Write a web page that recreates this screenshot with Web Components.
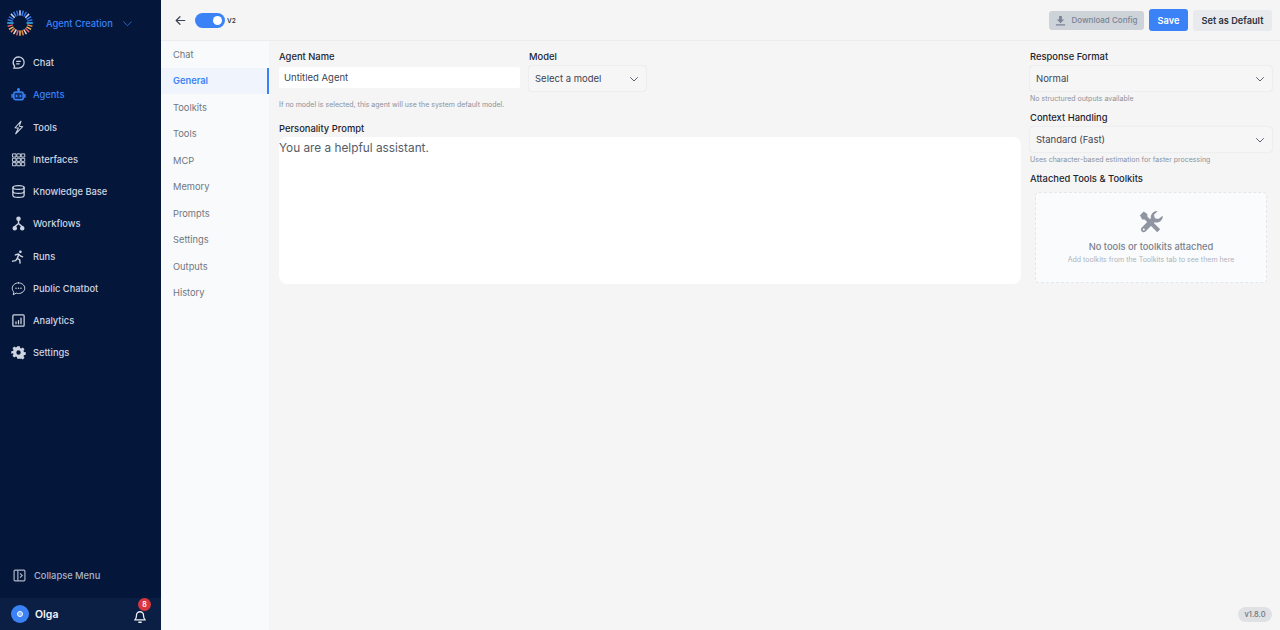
<!DOCTYPE html>
<html lang="en">
<head>
<meta charset="utf-8">
<title>Agent Creation</title>
<style>
  html, body { margin: 0; height: 100%; }
  body { font-family: Inter, "Liberation Sans", sans-serif; background: #f5f5f5; overflow: hidden; }
  app-shell { height: 630px; }
</style>
</head>
<body>
<app-shell>
  <side-bar slot="side" title-text="Agent Creation">
    <nav-item icon="chat" label="Chat"></nav-item>
    <nav-item icon="bot" label="Agents" active></nav-item>
    <nav-item icon="zap" label="Tools"></nav-item>
    <nav-item icon="grid" label="Interfaces"></nav-item>
    <nav-item icon="db" label="Knowledge Base"></nav-item>
    <nav-item icon="flow" label="Workflows"></nav-item>
    <nav-item icon="run" label="Runs"></nav-item>
    <nav-item icon="bubble" label="Public Chatbot"></nav-item>
    <nav-item icon="chart" label="Analytics"></nav-item>
    <nav-item icon="gear" label="Settings"></nav-item>
  </side-bar>
  <top-bar slot="top"></top-bar>
  <tab-rail slot="rail">
    <tab-item>Chat</tab-item>
    <tab-item active>General</tab-item>
    <tab-item>Toolkits</tab-item>
    <tab-item>Tools</tab-item>
    <tab-item>MCP</tab-item>
    <tab-item>Memory</tab-item>
    <tab-item>Prompts</tab-item>
    <tab-item>Settings</tab-item>
    <tab-item>Outputs</tab-item>
    <tab-item>History</tab-item>
  </tab-rail>
  <general-form slot="content"></general-form>
</app-shell>

<script>
const ICONS = {
  chat: '<path d="M12 3a9 9 0 0 1 0 18H4.500l1.300-3A9 9 0 0 1 12 3z"/><path d="M9 10h6M9 14h4"/>',
  bot: '<rect x="4.500" y="8" width="15" height="12.500" rx="3" fill="currentColor" fill-opacity=".25" stroke-width="2.400"/><path d="M12 8V5"/><circle cx="12" cy="3.800" r="1.400" fill="currentColor"/><path d="M1.800 12v4.500M22.200 12v4.500" stroke-width="2.400"/><path d="M9 13.500v1.500M15 13.500v1.500" stroke-width="2.600"/>',
  zap: '<path d="M15 1.500 6.500 13h5.500L8.500 22.500 18.500 10H13z" transform="rotate(6 12 12)" stroke-width="1.700"/>',
  grid: '<g stroke-width="1.500"><rect x="3" y="3" width="5" height="5"/><rect x="10" y="3" width="5" height="5"/><rect x="17" y="3" width="5" height="5"/><rect x="3" y="10" width="5" height="5"/><rect x="10" y="10" width="5" height="5"/><rect x="17" y="10" width="5" height="5"/><rect x="3" y="17" width="5" height="5"/><rect x="10" y="17" width="5" height="5"/><rect x="17" y="17" width="5" height="5"/></g>',
  db: '<ellipse cx="12" cy="5.500" rx="9" ry="3"/><path d="M3 5.500v13c0 1.700 4 3 9 3s9-1.300 9-3v-13"/><path d="M3 12c0 1.700 4 3 9 3s9-1.300 9-3"/>',
  flow: '<circle cx="12" cy="4.500" r="2.600" fill="currentColor"/><circle cx="6" cy="19.500" r="2.600" fill="currentColor"/><circle cx="18" cy="19.500" r="2.600" fill="currentColor"/><path d="M12 7v5M12 12l-6 5M12 12l6 5" stroke-width="2.200"/>',
  run: '<circle cx="15" cy="4.500" r="2.200" fill="currentColor" stroke="none"/><path d="M7 9.500l5-1.500 3 3 3.500 1.500M12.500 9l-2.500 6 4 2.500 .5 5M9.500 15.500 7.500 18.500 2.500 19.500" stroke-width="2.200"/>',
  bubble: '<path d="M12 3c5.500 0 10 3.800 10 8.500S17.500 20 12 20c-1.300 0-2.500-.2-3.600-.6L3.500 22l1-4.200C3 16.200 2 14 2 11.500 2 6.800 6.500 3 12 3z" stroke-width="1.600"/><path d="M8 11.500h.01M12 11.500h.01M16 11.500h.01" stroke-width="2.400"/>',
  chart: '<rect x="3" y="3" width="18" height="18" rx="1.500" stroke-width="2"/><path d="M8 17v-3M12 17v-5M16 17V8" stroke-width="2"/>',
  gear: '<path fill="currentColor" stroke="none" fill-rule="evenodd" d="M10 2h4l.6 2.900 1.700.7 2.500-1.600 2.800 2.800-1.600 2.500.7 1.700 2.900.6v4l-2.900.6-.7 1.700 1.600 2.500-2.800 2.800-2.500-1.600-1.700.7L14 22h-4l-.6-2.900-1.700-.7-2.500 1.600-2.800-2.800 1.600-2.500-.7-1.700L.4 14v-4l2.900-.6.7-1.700L2.400 5.200 5.200 2.400l2.500 1.600 1.700-.7zM12 8.500a3.500 3.500 0 1 0 0 7 3.500 3.500 0 0 0 0-7z"/>'
};

const chevron = (size, color, width = 2) => `<svg width="${size}" height="${size}" viewBox="0 0 24 24" fill="none" stroke="${color}" stroke-width="${width}" stroke-linecap="round" stroke-linejoin="round"><path d="m5 9 7 7 7-7"/></svg>`;

// spinner style logo, ticks go from blue on top to warm colours at the bottom
function logoSvg() {
  let out = '';
  const n = 24;
  for (let i = 0; i < n; i++) {
    const a = (i / n) * Math.PI * 2;
    const deg = i / n * 360;
    const side = deg > 75 && deg < 105 || deg > 255 && deg < 285;
    const r1 = side ? 6.500 : 7.500;
    const x1 = 13 + Math.sin(a) * r1, y1 = 13 - Math.cos(a) * r1;
    const x2 = 13 + Math.sin(a) * 12.800, y2 = 13 - Math.cos(a) * 12.800;
    let c;
    if (side) c = '#38bdf8';
    else if (deg <= 75 || deg >= 285) c = ['#c9d8f5', '#3b82f6', '#2f6fe8'][i % 3];
    else c = ['#f2c14e', '#e8606e', '#f4d6c4', '#ef8a4a'][i % 4];
    out += `<line x1="${x1.toFixed(1)}" y1="${y1.toFixed(1)}" x2="${x2.toFixed(1)}" y2="${y2.toFixed(1)}" stroke="${c}" stroke-width="1.500"/>`;
  }
  return `<svg width="26" height="26" viewBox="0 0 26 26">${out}</svg>`;
}

class AppShell extends HTMLElement {
  constructor() {
    super();
    this.attachShadow({ mode: "open" }).innerHTML = `
      <style>
        :host { display: grid; grid-template-columns: 161px 108px 1fr; grid-template-rows: 41px 1fr; width: 1280px; }
        ::slotted([slot=side]) { grid-row: 1 / 3; }
        ::slotted([slot=top]) { grid-column: 2 / 4; }
      </style>
      <slot name="side"></slot><slot name="top"></slot><slot name="rail"></slot><slot name="content"></slot>`;
  }
}

class SideBar extends HTMLElement {
  constructor() {
    super();
    this.attachShadow({ mode: "open" }).innerHTML = `
      <style>
        :host { display: flex; flex-direction: column; background: #04163a; color: #cfd5e0; width: 161px; height: 630px; font-family: Inter, sans-serif; }
        .brand { display: flex; align-items: center; height: 46px; padding-left: 7px; flex: none; }
        .brand b { font-weight: 500; font-size: 9.300px; color: #3b82f6; margin-left: 13px; }
        .brand svg:last-child { margin-left: 8px; }
        nav { display: flex; flex-direction: column; flex: 1; padding-top: .4px; }
        .collapse { display: flex; align-items: center; gap: 8px; height: 46px; padding-left: 13px; font-size: 9.300px; font-weight: 500; color: #aab4c5; flex: none; margin-top: auto; }
        .user { display: flex; align-items: center; height: 32px; background: #0b1f45; padding-left: 11px; flex: none; }
        .avatar { width: 18px; height: 18px; border-radius: 50%; background: #3b82f6; display: flex; align-items: center; justify-content: center; }
        .avatar i { width: 6px; height: 6px; border: 1.500px solid #fff; border-radius: 50%; background: #8fb5fb; box-sizing: border-box; }
        .name { margin-left: 6px; font-size: 10.500px; font-weight: 600; color: #f3f5f8; }
        .bell { position: relative; margin-left: auto; margin-right: 14px; width: 14px; height: 14px; margin-top: 2px; }
        .badge { position: absolute; left: 5px; top: -10px; width: 13px; height: 13px; border-radius: 50%; background: #d9363e; color: #fff; font-size: 7px; font-weight: 600; display: flex; align-items: center; justify-content: center; }
      </style>
      <div class="brand">${logoSvg()}<b>${this.getAttribute("title-text")}</b>${chevron(13, "#3370d8", 1.600)}</div>
      <nav><slot></slot></nav>
      <div class="collapse">
        <svg width="13" height="13" viewBox="0 0 24 24" fill="none" stroke="#aab4c5" stroke-width="2.200"><rect x="2" y="2" width="20" height="20" rx="2"/><path d="M9 2v20M13 8l4 4-4 4"/></svg>
        <span>Collapse Menu</span>
      </div>
      <div class="user">
        <div class="avatar"><i></i></div>
        <span class="name">Olga</span>
        <div class="bell">
          <svg width="14" height="14" viewBox="0 0 24 24" fill="none" stroke="#eef1f6" stroke-width="2.200" stroke-linejoin="round" stroke-linecap="round"><path d="M6 9a6 6 0 0 1 12 0c0 6 3 8 3 8H3s3-2 3-8"/><path d="M10 21h4"/></svg>
          <span class="badge">8</span>
        </div>
      </div>`;
  }
}

class NavItem extends HTMLElement {
  constructor() {
    super();
    const active = this.hasAttribute("active");
    this.attachShadow({ mode: "open" }).innerHTML = `
      <style>
        :host { display: flex; align-items: center; height: 32.250px; padding-left: 11px; gap: 7px; color: ${active ? "#3b82f6" : "#cfd5e0"}; font-size: 9.300px; font-weight: 500; }
        svg { flex: none; }
      </style>
      <svg width="15" height="15" viewBox="0 0 24 24" fill="none" stroke="currentColor" stroke-width="2" stroke-linecap="round" stroke-linejoin="round">${ICONS[this.getAttribute("icon")]}</svg>
      <span>${this.getAttribute("label")}</span>`;
  }
}

class TopBar extends HTMLElement {
  constructor() {
    super();
    this.attachShadow({ mode: "open" }).innerHTML = `
      <style>
        :host { display: flex; align-items: center; height: 41px; box-sizing: border-box; border-bottom: 1px solid #ececee; background: #f5f5f5; padding: 0 8px 0 13px; font-family: Inter, sans-serif; }
        .toggle { width: 30px; height: 15px; border-radius: 8px; background: #3b82f6; margin: 1px 0 0 8px; position: relative; }
        .toggle i { position: absolute; right: 3px; top: 3px; width: 9px; height: 9px; border-radius: 50%; background: #fff; }
        .v { font-size: 6.500px; font-weight: 600; color: #333a45; margin: 1px 0 0 2px; }
        .actions { margin-left: auto; display: flex; align-items: center; gap: 5px; }
        .btn { display: flex; align-items: center; justify-content: center; border-radius: 3px; font-weight: 600; box-sizing: border-box; }
        .dl { width: 95px; height: 19px; background: #ced2d9; color: #7b8494; font-size: 8px; font-weight: 500; gap: 5px; }
        .save { width: 39px; height: 22px; background: #3b82f6; color: #fff; font-size: 9.200px; }
        .def { width: 79px; height: 21px; background: #e8eaed; color: #2b3240; font-size: 9.200px; }
      </style>
      <svg width="13" height="13" viewBox="0 0 24 24" fill="none" stroke="#3d4654" stroke-width="2.200" stroke-linecap="round" stroke-linejoin="round"><path d="M20 12H4M11 5l-7 7 7 7"/></svg>
      <div class="toggle"><i></i></div>
      <span class="v">V2</span>
      <div class="actions">
        <div class="btn dl">
          <svg width="11" height="11" viewBox="0 0 24 24" fill="#7b8494"><path d="M9 2h6v8h5l-8 8-8-8h5zM2 20h20v3H2z"/></svg>
          <span>Download Config</span>
        </div>
        <div class="btn save">Save</div>
        <div class="btn def">Set as Default</div>
      </div>`;
  }
}

class TabRail extends HTMLElement {
  constructor() {
    super();
    this.attachShadow({ mode: "open" }).innerHTML = `
      <style>
        :host { display: flex; flex-direction: column; background: #f9fafc; height: 589px; padding-top: .3px; box-sizing: border-box; }
      </style>
      <slot></slot>`;
  }
}

class TabItem extends HTMLElement {
  constructor() {
    super();
    const active = this.hasAttribute("active");
    this.attachShadow({ mode: "open" }).innerHTML = `
      <style>
        :host { display: flex; align-items: center; height: 26.450px; box-sizing: border-box; padding-left: 12px; font-size: 9.300px; font-weight: ${active ? 600 : 400}; color: ${active ? "#3b82f6" : "#6f7680"};
          ${active ? "background: #eff4fd; border-right: 2px solid #3b82f6;" : ""} }
      </style>
      <slot></slot>`;
  }
}

class FieldLabel extends HTMLElement {
  constructor() {
    super();
    this.attachShadow({ mode: "open" }).innerHTML = `
      <style>
        :host { display: block; font-size: 9.400px; font-weight: 500; line-height: 13px; color: #1d2430; }
      </style>
      <slot></slot>`;
  }
}

class FieldHint extends HTMLElement {
  constructor() {
    super();
    this.attachShadow({ mode: "open" }).innerHTML = `
      <style>
        :host { display: block; font-size: 7px; line-height: 10px; color: #8b929c; }
      </style>
      <slot></slot>`;
  }
}

class SelectBox extends HTMLElement {
  constructor() {
    super();
    this.attachShadow({ mode: "open" }).innerHTML = `
      <style>
        :host { display: flex; align-items: center; justify-content: space-between; height: 25px; box-sizing: border-box; padding: 0 6px 0 6px; background: #f6f6f7; border-radius: 3px; box-shadow: 0 0 1.500px rgba(40,60,90,.2); font-size: 9.500px; color: #3c4450; }
      </style>
      <slot></slot>${chevron(12, "#4c5562", 1.800)}`;
  }
}

class AttachedPanel extends HTMLElement {
  constructor() {
    super();
    this.attachShadow({ mode: "open" }).innerHTML = `
      <style>
        :host { display: flex; flex-direction: column; align-items: center; height: 91px; box-sizing: border-box; margin: 0 5px; padding-top: 17px; background: #fafbfd; border: 1px dashed #e4e6ea; border-radius: 4px; }
        strong { font-size: 9.300px; font-weight: 500; color: #7a818d; margin-top: 6px; line-height: 12px; }
        span { font-size: 7px; color: #aeb3bb; line-height: 10px; margin-top: 2px; }
      </style>
      <svg width="25" height="25" viewBox="0 0 24 24" fill="#8f95a1">
        <path d="M4.500 1.500 8 3.800v2.400l12.300 12.300-2.800 2.800L5.400 9 3 9 .9 5.100z"/>
        <path d="M22.800 5.500a6 6 0 0 1-7.800 6.300L6.500 20.500a2.600 2.600 0 0 1-3.800-3.700l8.700-8.800A6 6 0 0 1 18 .9l-3.600 3.700.8 3.300 3.300.8z"/>
        <circle cx="4.600" cy="18.700" r="1" fill="#fafbfd"/>
      </svg>
      <strong>No tools or toolkits attached</strong>
      <span>Add toolkits from the Toolkits tab to see them here</span>`;
  }
}

class GeneralForm extends HTMLElement {
  constructor() {
    super();
    this.attachShadow({ mode: "open" }).innerHTML = `
      <style>
        :host { display: grid; grid-template-columns: 742px 242px; column-gap: 9px; padding: 9px 8px 0 10px; position: relative; height: 580px; align-content: start; background: #f5f5f5; }
        .left { display: flex; flex-direction: column; }
        .row { display: flex; gap: 9px; }
        .name { width: 241px; }
        .input { height: 21px; margin-top: 4px; background: #fff; border-radius: 2px; font-size: 9.500px; color: #3c4450; display: flex; align-items: center; padding-left: 5px; box-sizing: border-box; }
        .model { width: 117px; }
        .model select-box { margin-top: 3px; }
        field-hint.first { margin-top: 9px; }
        .prompt-label { margin-top: 12px; }
        .prompt { margin-top: 2px; height: 147px; background: #fff; border-radius: 8px; font-size: 11.800px; line-height: 23px; color: #555c67; }
        .right { display: flex; flex-direction: column; }
        .right select-box { margin-top: 3px; }
        .right field-hint { margin-top: 3px; }
        .right field-label.next { margin-top: 7px; }
        .right field-hint.mid { margin-top: 3px; }
        .right select-box.mid { margin-top: 3px; }
        .right field-label.last { margin-top: 7px; }
        attached-panel { margin-top: 7px; }
        .version { position: absolute; right: 8px; bottom: 8px; height: 15px; width: 34px; border-radius: 8px; background: #dfe1e4; color: #6e747e; font-size: 7.500px; font-weight: 500; display: flex; align-items: center; justify-content: center; }
      </style>
      <div class="left">
        <div class="row">
          <div class="name">
            <field-label>Agent Name</field-label>
            <div class="input">Untitled Agent</div>
          </div>
          <div class="model">
            <field-label>Model</field-label>
            <select-box>Select a model</select-box>
          </div>
        </div>
        <field-hint class="first">If no model is selected, this agent will use the system default model.</field-hint>
        <field-label class="prompt-label">Personality Prompt</field-label>
        <div class="prompt">You are a helpful assistant.</div>
      </div>
      <div class="right">
        <field-label>Response Format</field-label>
        <select-box>Normal</select-box>
        <field-hint>No structured outputs available</field-hint>
        <field-label class="next">Context Handling</field-label>
        <select-box class="mid">Standard (Fast)</select-box>
        <field-hint class="mid">Uses character-based estimation for faster processing</field-hint>
        <field-label class="last">Attached Tools &amp; Toolkits</field-label>
        <attached-panel></attached-panel>
      </div>
      <div class="version">v1.8.0</div>`;
  }
}

customElements.define("app-shell", AppShell);
customElements.define("side-bar", SideBar);
customElements.define("nav-item", NavItem);
customElements.define("top-bar", TopBar);
customElements.define("tab-rail", TabRail);
customElements.define("tab-item", TabItem);
customElements.define("field-label", FieldLabel);
customElements.define("field-hint", FieldHint);
customElements.define("select-box", SelectBox);
customElements.define("attached-panel", AttachedPanel);
customElements.define("general-form", GeneralForm);
</script>
</body>
</html>
